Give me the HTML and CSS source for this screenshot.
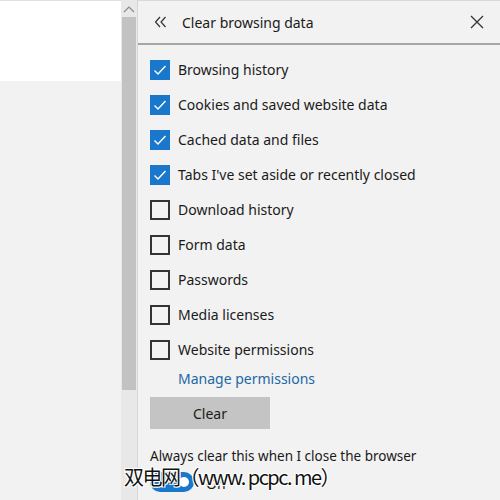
FILE: index.html
```html
<!DOCTYPE html>
<html>
<head>
<meta charset="utf-8">
<link rel="stylesheet" href="styles.css">
</head>
<body>
<div class="app">
  <div class="page">
    <div class="page-white"></div>
  </div>
  <div class="scrollbar">
    <div class="sb-arrow">
      <svg width="12" height="8" viewBox="0 0 12 8"><path d="M1 7 L6 2 L11 7" fill="none" stroke="#8a8a8a" stroke-width="1.2"/></svg>
    </div>
    <div class="sb-thumb"></div>
  </div>
  <div class="panel">
    <div class="header">
      <svg class="back" width="13" height="12" viewBox="0 0 13 12"><path d="M6 1 L1.5 6 L6 11 M11.5 1 L7 6 L11.5 11" fill="none" stroke="#333" stroke-width="1.2"/></svg>
      <span class="title">Clear browsing data</span>
      <svg class="close" width="16" height="16" viewBox="0 0 16 16"><path d="M2 2 L14 14 M14 2 L2 14" fill="none" stroke="#333" stroke-width="1.3"/></svg>
    </div>
    <div class="list">
      <div class="row"><span class="cb on"><svg width="20" height="20" viewBox="0 0 20 20"><path d="M4.5 10.5 L8 14 L15.5 6" fill="none" stroke="#fff" stroke-width="1.4"/></svg></span><span>Browsing history</span></div>
      <div class="row"><span class="cb on"><svg width="20" height="20" viewBox="0 0 20 20"><path d="M4.5 10.5 L8 14 L15.5 6" fill="none" stroke="#fff" stroke-width="1.4"/></svg></span><span>Cookies and saved website data</span></div>
      <div class="row"><span class="cb on"><svg width="20" height="20" viewBox="0 0 20 20"><path d="M4.5 10.5 L8 14 L15.5 6" fill="none" stroke="#fff" stroke-width="1.4"/></svg></span><span>Cached data and files</span></div>
      <div class="row"><span class="cb on"><svg width="20" height="20" viewBox="0 0 20 20"><path d="M4.5 10.5 L8 14 L15.5 6" fill="none" stroke="#fff" stroke-width="1.4"/></svg></span><span>Tabs I've set aside or recently closed</span></div>
      <div class="row"><span class="cb"></span><span>Download history</span></div>
      <div class="row"><span class="cb"></span><span>Form data</span></div>
      <div class="row"><span class="cb"></span><span>Passwords</span></div>
      <div class="row"><span class="cb"></span><span>Media licenses</span></div>
      <div class="row"><span class="cb"></span><span>Website permissions</span></div>
    </div>
    <div class="manage">Manage permissions</div>
    <div class="btn">Clear</div>
    <div class="always">Always clear this when I close the browser</div>
    <div class="toggle-row">
      <span class="toggle"><span class="knob"></span></span>
      <span class="on-label">On</span>
    </div>
  </div>
  <div class="watermark">双电网（www. pcpc. me）</div>
</div>
</body>
</html>
```

FILE: styles.css
```css
html, body {
  margin: 0;
  padding: 0;
  width: 500px;
  height: 500px;
  overflow: hidden;
  background: #f2f2f2;
}
.app {
  position: relative;
  display: flex;
  width: 500px;
  height: 500px;
  font-family: "Noto Sans", "Open Sans", sans-serif;
  color: #1a1a1a;
}
.page {
  width: 121px;
  background: #f2f2f2;
}
.page-white {
  height: 80px;
  background: #ffffff;
  border-top: 1px solid #e0e0e0;
}
.scrollbar {
  width: 16px;
  background: #e8e8e8;
  display: flex;
  flex-direction: column;
  align-items: center;
}
.sb-arrow {
  height: 17px;
  width: 16px;
  display: flex;
  align-items: center;
  justify-content: center;
}
.sb-thumb {
  width: 14px;
  height: 373px;
  background: #c2c2c2;
}
.panel {
  flex: 1;
  background: #f2f2f2;
  border-left: 1px solid #d6d6d6;
  border-top: 1px solid #d8d8d8;
  display: flex;
  flex-direction: column;
}
.header {
  height: 42px;
  border-bottom: 2px solid #a6a6a6;
  display: flex;
  align-items: center;
  padding: 0 15px 0 16px;
  box-sizing: content-box;
}
.back {
  margin-right: 15px;
}
.title {
  flex: 1;
  font-size: 14px;
}
.close {
  margin-top: -1px;
}
.list {
  padding: 7px 0 0 12px;
  display: flex;
  flex-direction: column;
}
.row {
  height: 35px;
  display: flex;
  align-items: center;
  font-size: 14px;
}
.cb {
  width: 20px;
  height: 20px;
  box-sizing: border-box;
  border: 2px solid #333;
  margin-right: 8px;
  flex-shrink: 0;
}
.cb.on {
  border: none;
  background: #1a78cc;
}
.cb svg {
  display: block;
}
.manage {
  margin-left: 40px;
  font-size: 14px;
  color: #2367a3;
  height: 24px;
  line-height: 24px;
  margin-top: 0;
}
.btn {
  margin: 6px 0 0 12px;
  width: 120px;
  height: 32px;
  background: #c4c4c4;
  display: flex;
  align-items: center;
  justify-content: center;
  font-size: 14px;
}
.always {
  margin: 18px 0 0 12px;
  font-size: 13.5px;
}
.toggle-row {
  margin: 5px 0 0 12px;
  display: flex;
  align-items: center;
}
.toggle {
  width: 44px;
  height: 20px;
  border-radius: 10px;
  background: #1a78cc;
  display: flex;
  align-items: center;
  justify-content: flex-end;
  padding-right: 5px;
  box-sizing: border-box;
}
.knob {
  width: 10px;
  height: 10px;
  border-radius: 50%;
  background: #fff;
}
.on-label {
  margin-left: 12px;
  font-size: 14px;
  margin-top: 4px;
}
.watermark {
  position: absolute;
  left: 124px;
  top: 462px;
  font-family: "Noto Sans CJK SC", sans-serif;
  font-size: 20px;
  color: #111;
  text-shadow: 1px 1px 0 #fff, -1px -1px 0 #fff, 1px -1px 0 #fff, -1px 1px 0 #fff;
  white-space: nowrap;
  letter-spacing: -1.5px;
}
```
